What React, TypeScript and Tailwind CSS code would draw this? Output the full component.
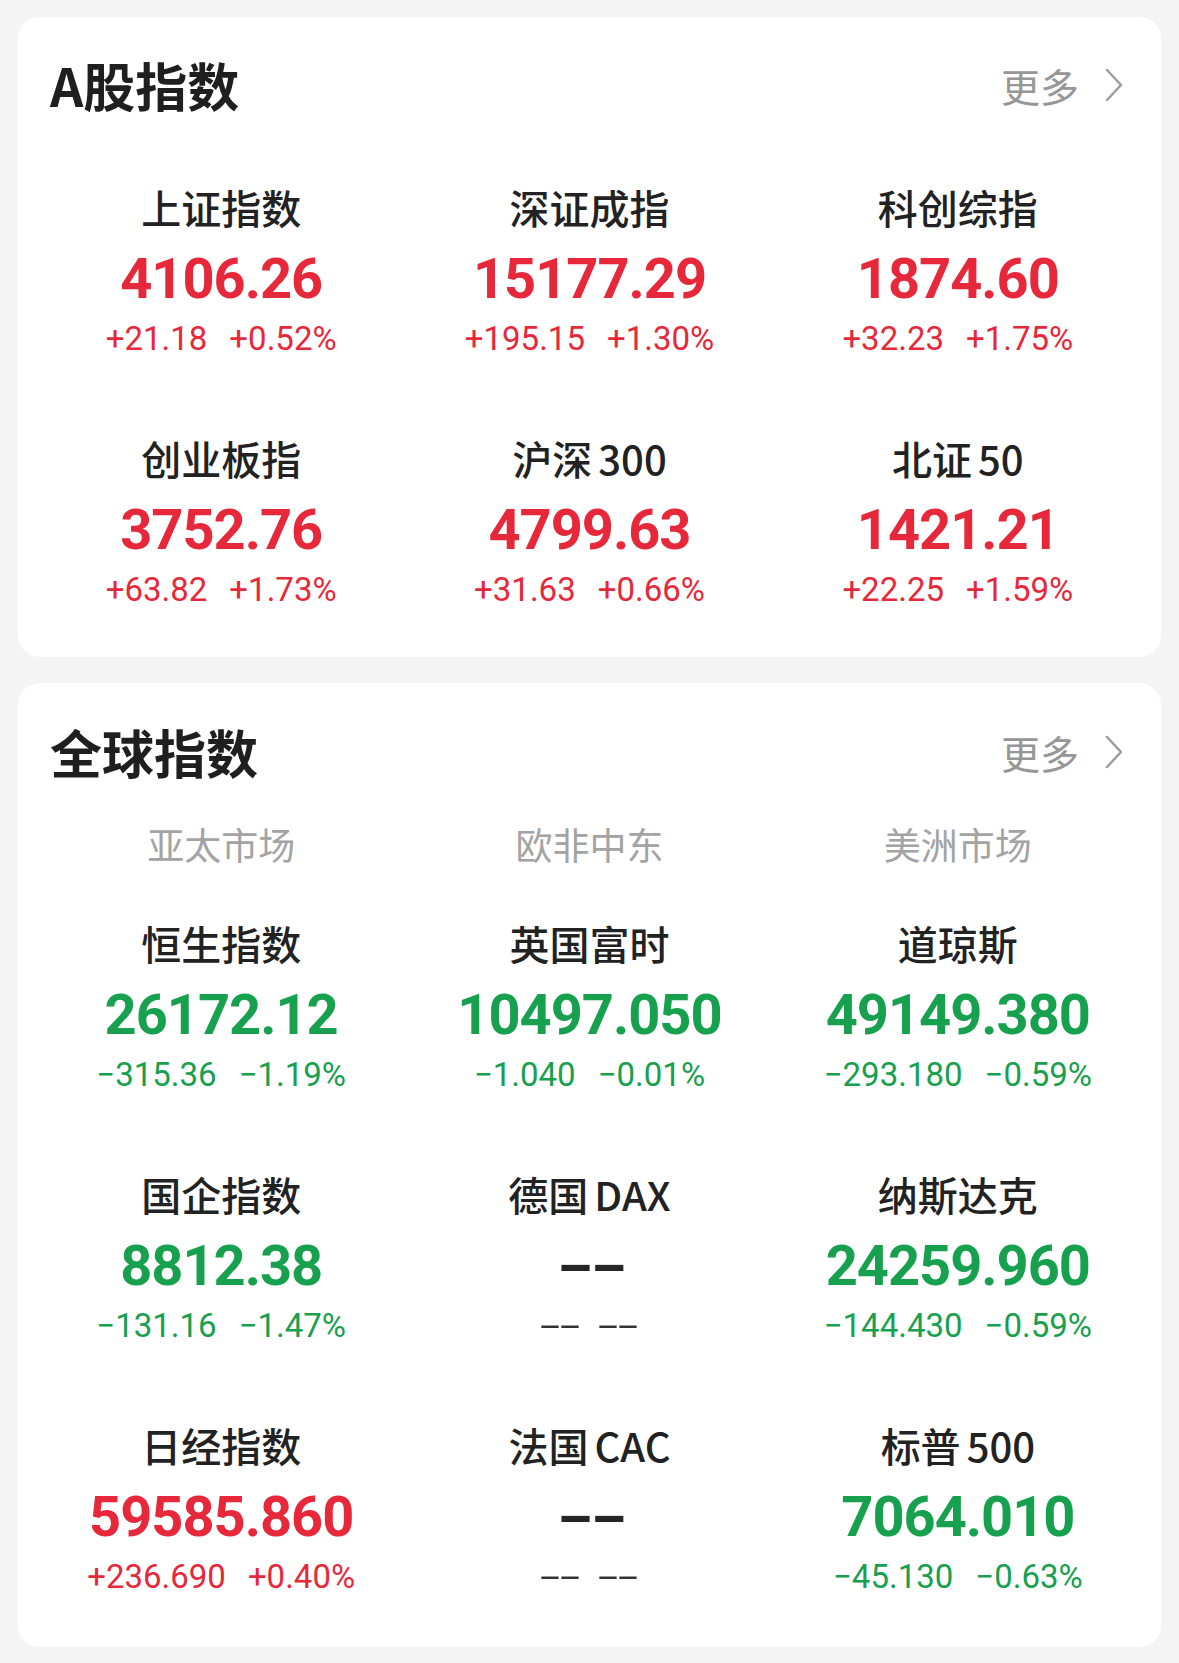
import React from "react";

type Item = { name: string; latin?: string; value: string; chg: string; pct: string; dir: "up" | "down" | "none" };

const aShares: Item[] = [
  { name: "上证指数", value: "4106.26", chg: "+21.18", pct: "+0.52%", dir: "up" },
  { name: "深证成指", value: "15177.29", chg: "+195.15", pct: "+1.30%", dir: "up" },
  { name: "科创综指", value: "1874.60", chg: "+32.23", pct: "+1.75%", dir: "up" },
  { name: "创业板指", value: "3752.76", chg: "+63.82", pct: "+1.73%", dir: "up" },
  { name: "沪深", latin: "300", value: "4799.63", chg: "+31.63", pct: "+0.66%", dir: "up" },
  { name: "北证", latin: "50", value: "1421.21", chg: "+22.25", pct: "+1.59%", dir: "up" },
];

const globalIdx: Item[] = [
  { name: "恒生指数", value: "26172.12", chg: "−315.36", pct: "−1.19%", dir: "down" },
  { name: "英国富时", value: "10497.050", chg: "−1.040", pct: "−0.01%", dir: "down" },
  { name: "道琼斯", value: "49149.380", chg: "−293.180", pct: "−0.59%", dir: "down" },
  { name: "国企指数", value: "8812.38", chg: "−131.16", pct: "−1.47%", dir: "down" },
  { name: "德国", latin: "DAX", value: "--", chg: "--", pct: "--", dir: "none" },
  { name: "纳斯达克", value: "24259.960", chg: "−144.430", pct: "−0.59%", dir: "down" },
  { name: "日经指数", value: "59585.860", chg: "+236.690", pct: "+0.40%", dir: "up" },
  { name: "法国", latin: "CAC", value: "--", chg: "--", pct: "--", dir: "none" },
  { name: "标普", latin: "500", value: "7064.010", chg: "−45.130", pct: "−0.63%", dir: "down" },
];

const cjk = { fontFamily: '"Noto Sans CJK SC", "Noto Sans", sans-serif' };
const num = { fontFamily: 'Roboto, "Noto Sans", sans-serif' };

function Chevron() {
  return (
    <svg width="18" height="34" viewBox="0 0 18 34" fill="none" className="ml-[26px]">
      <path d="M2 2 L16 17 L2 32" stroke="#9a9a9a" strokeWidth="2.4" strokeLinecap="round" strokeLinejoin="round" />
    </svg>
  );
}

function Header({ title }: { title: string }) {
  return (
    <div className="flex h-[60px] items-center justify-between pl-[32px] pr-[38px]">
      <div className="text-[52px] font-bold leading-[60px] text-[#1f1f1f]" style={cjk}>
        {title}
      </div>
      <div className="flex items-center">
        <span className="text-[39px] leading-[48px] text-[#969696]" style={cjk}>
          更多
        </span>
        <Chevron />
      </div>
    </div>
  );
}

function Cell({ it }: { it: Item }) {
  const color = it.dir === "up" ? "text-[#e6283a]" : it.dir === "down" ? "text-[#17a04e]" : "text-[#262626]";
  return (
    <div className="flex flex-col items-center">
      <div className="flex h-[48px] items-center text-[40px] font-medium leading-[48px] text-[#222222]" style={cjk}>
        <span>{it.name}</span>
        {it.latin && <span className="ml-[6px]">{it.latin}</span>}
      </div>
      {it.dir === "none" ? (
        <>
          <div className="mt-[18px] flex h-[60px] items-center justify-center">
            <span
              className="inline-block origin-center scale-x-[1.82] text-[56px] font-bold leading-[60px] tracking-[-3.5px] text-[#262626]"
              style={num}
            >
              {it.value}
            </span>
          </div>
          <div className="mt-[10px] flex h-[40px] items-center justify-center gap-[40px]">
            <span
              className="inline-block origin-center scale-x-[2.2] text-[33px] leading-[40px] tracking-[0px] text-[#333333]"
              style={num}
            >
              {it.chg}
            </span>
            <span
              className="inline-block origin-center scale-x-[2.2] text-[33px] leading-[40px] tracking-[0px] text-[#333333]"
              style={num}
            >
              {it.pct}
            </span>
          </div>
        </>
      ) : (
        <>
          <div className={`mt-[18px] h-[60px] text-[56px] font-bold leading-[60px] tracking-[-1px] ${color}`} style={num}>
            {it.value}
          </div>
          <div className={`mt-[10px] flex h-[40px] items-center gap-[22px] text-[33px] leading-[40px] ${color}`} style={num}>
            <span>{it.chg}</span>
            <span>{it.pct}</span>
          </div>
        </>
      )}
    </div>
  );
}

export default function App() {
  return (
    <div className="min-h-[1663px] w-[1179px] bg-[#f4f4f4] px-[18px] pt-[17px] pb-[16px]">
      <div className="h-[640px] rounded-[22px] bg-white pt-[38px]">
        <Header title="A股指数" />
        <div className="mt-[68px] grid grid-cols-3 gap-y-[75px] px-[19px]">
          {aShares.map((it) => (
            <Cell key={it.name + (it.latin ?? "")} it={it} />
          ))}
        </div>
      </div>
      <div className="mt-[26px] h-[964px] rounded-[22px] bg-white pt-[39px]">
        <Header title="全球指数" />
        <div className="mt-[40px] grid grid-cols-3 px-[19px]">
          {["亚太市场", "欧非中东", "美洲市场"].map((t) => (
            <div key={t} className="text-center text-[37px] leading-[44px] text-[#a3a3a3]" style={cjk}>
              {t}
            </div>
          ))}
        </div>
        <div className="mt-[53px] grid grid-cols-3 gap-y-[75px] px-[19px]">
          {globalIdx.map((it) => (
            <Cell key={it.name + (it.latin ?? "")} it={it} />
          ))}
        </div>
      </div>
    </div>
  );
}
